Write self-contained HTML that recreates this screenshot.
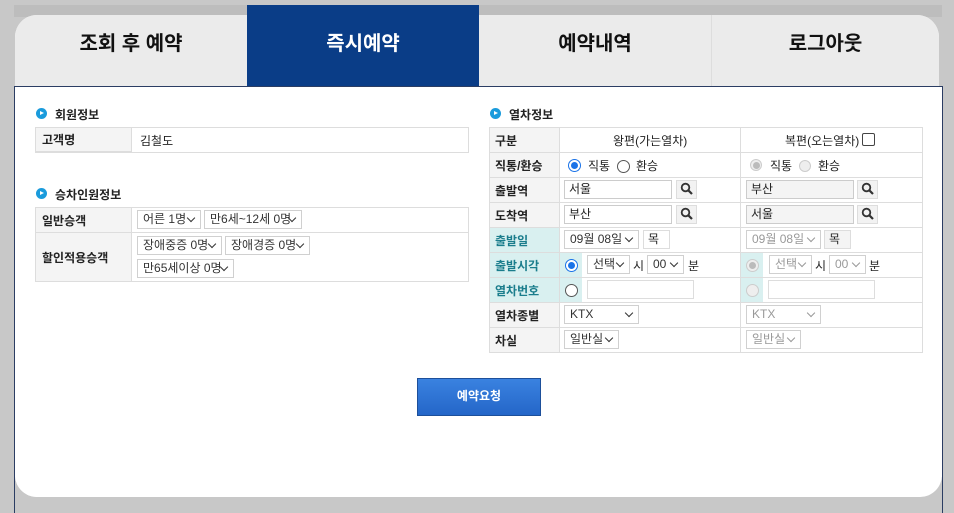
<!DOCTYPE html>
<html><head><meta charset="utf-8"><style>
*{margin:0;padding:0;box-sizing:border-box}
html,body{width:954px;height:513px;overflow:hidden}
body{background:#c8c8c8;font-family:"Liberation Sans","Noto Sans CJK KR",sans-serif;font-size:12px;color:#222;position:relative}
.a{position:absolute}
.frame{left:14px;top:5px;width:928px;height:12px;background:#bdbdbd}
.card{left:15px;top:15px;width:924px;height:482px;background:#fff;border-radius:22px}
.tab{position:absolute;top:15px;height:71px;background:#ebebeb;font-size:20px;font-weight:bold;color:#111;text-align:center;line-height:58px}
.h{font-weight:bold;font-size:12px;color:#222}
.ic{position:absolute;width:11px;height:11px;border-radius:50%;background:#1a9bdc}
.ic:after{content:"";position:absolute;left:4px;top:3px;border-left:4px solid #fff;border-top:2.5px solid transparent;border-bottom:2.5px solid transparent}
.box{position:absolute;border:1px solid #ddd;background:#fff}
.cell{position:absolute;border-right:1px solid #ddd;border-bottom:1px solid #ddd;display:flex;align-items:center}
.lb{background:#f4f4f4;font-weight:bold;padding-left:6px}
.cy{background:#d9f0f0;color:#1a7d8c}
.sel{position:absolute;height:19px;border:1px solid #d0d0d0;background:#fff;padding-left:5px;line-height:17px;font-size:12px;color:#333}
.sel:after{content:"";position:absolute;right:6px;top:4px;width:5px;height:5px;border-right:1.3px solid #333;border-bottom:1.3px solid #333;transform:rotate(45deg)}
.g{color:#999}
.g.sel:after{border-color:#999}
.inp{position:absolute;height:19px;border:1px solid #ccc;background:#fff;padding-left:4px;line-height:17px}
.sb{position:absolute;width:21px;height:19px;border:1px solid #ddd;background:#f2f2f2}
.rad{position:absolute;width:13px;height:13px;border-radius:50%;border:1px solid #555;background:#fff}
.rad.on{border-color:#1a73e8}
.rad.on:after{content:"";position:absolute;left:2px;top:2px;width:7px;height:7px;border-radius:50%;background:#1a73e8}
.rad.dis{border-color:#ccc;background:#eee}
.rad.dis.on:after{background:#bbb}
.t{position:absolute;white-space:nowrap}
</style></head><body>
<div class="a frame"></div>
<div class="a card"></div>
<div class="tab" style="left:15px;width:232px;border-top-left-radius:22px">조회 후 예약</div>
<div class="tab" style="left:247px;top:5px;height:81px;width:232px;background:#0a3d87;color:#fff;line-height:78px">즉시예약</div>
<div class="tab" style="left:479px;width:233px;border-right:1px solid #ddd">예약내역</div>
<div class="tab" style="left:712px;width:227px;border-top-right-radius:22px">로그아웃</div>
<div class="a" style="left:14px;top:86px;width:929px;height:1px;background:#2b3d63"></div>
<div class="a" style="left:15px;top:87px;width:927px;height:390px;background:#fff"></div>
<div class="a" style="left:15px;top:470px;width:927px;height:27px;background:#fff;border-radius:0 0 22px 22px"></div>
<div class="a" style="left:14px;top:86px;width:1px;height:427px;background:#2b3d63"></div>
<div class="a" style="left:942px;top:86px;width:1px;height:427px;background:#2b3d63"></div>

<!-- left -->
<div class="ic" style="left:36px;top:108px"></div><div class="t h" style="left:55px;top:106px">회원정보</div>
<div class="box" style="left:35px;top:127px;width:434px;height:26px"></div>
<div class="cell lb" style="left:36px;top:128px;width:96px;height:24px">고객명</div>
<div class="t" style="left:140px;top:132px">김철도</div>

<div class="ic" style="left:36px;top:188px"></div><div class="t h" style="left:55px;top:186px">승차인원정보</div>
<div class="box" style="left:35px;top:207px;width:434px;height:75px"></div>
<div class="cell lb" style="left:36px;top:208px;width:96px;height:25px">일반승객</div>
<div class="a" style="left:132px;top:232px;width:336px;height:1px;background:#ddd"></div>
<div class="cell lb" style="left:36px;top:233px;width:96px;height:48px;border-bottom:none">할인적용승객</div>
<div class="sel" style="left:137px;top:210px;width:64px">어른 1명</div>
<div class="sel" style="left:204px;top:210px;width:98px">만6세~12세 0명</div>
<div class="sel" style="left:137px;top:236px;width:85px">장애중증 0명</div>
<div class="sel" style="left:225px;top:236px;width:85px">장애경증 0명</div>
<div class="sel" style="left:137px;top:259px;width:97px">만65세이상 0명</div>

<!-- right -->
<div class="ic" style="left:490px;top:108px"></div><div class="t h" style="left:509px;top:106px">열차정보</div>
<div class="box" style="left:489px;top:127px;width:434px;height:226px"></div>
<div class="a" style="left:490px;top:128px;width:69px;height:224px;background:#f4f4f4"></div>
<div class="a cy" style="left:490px;top:228px;width:69px;height:75px"></div>
<div class="a cy" style="left:560px;top:253px;width:22px;height:50px"></div>
<div class="a cy" style="left:741px;top:253px;width:22px;height:50px"></div>
<div class="a" style="left:559px;top:128px;width:1px;height:224px;background:#ddd"></div>
<div class="a" style="left:740px;top:128px;width:1px;height:224px;background:#ddd"></div>
<div class="a" style="left:490px;top:152px;width:432px;height:1px;background:#ddd"></div>
<div class="a" style="left:490px;top:177px;width:432px;height:1px;background:#ddd"></div>
<div class="a" style="left:490px;top:202px;width:432px;height:1px;background:#ddd"></div>
<div class="a" style="left:490px;top:227px;width:432px;height:1px;background:#ddd"></div>
<div class="a" style="left:490px;top:252px;width:432px;height:1px;background:#ddd"></div>
<div class="a" style="left:490px;top:277px;width:432px;height:1px;background:#ddd"></div>
<div class="a" style="left:490px;top:302px;width:432px;height:1px;background:#ddd"></div>
<div class="a" style="left:490px;top:327px;width:432px;height:1px;background:#ddd"></div>
<div class="t" style="left:495px;top:132px;font-weight:bold">구분</div>
<div class="t" style="left:495px;top:157px;font-weight:bold">직통/환승</div>
<div class="t" style="left:495px;top:182px;font-weight:bold">출발역</div>
<div class="t" style="left:495px;top:207px;font-weight:bold">도착역</div>
<div class="t" style="left:495px;top:232px;font-weight:bold;color:#1a7d8c">출발일</div>
<div class="t" style="left:495px;top:257px;font-weight:bold;color:#1a7d8c">출발시각</div>
<div class="t" style="left:495px;top:282px;font-weight:bold;color:#1a7d8c">열차번호</div>
<div class="t" style="left:495px;top:307px;font-weight:bold">열차종별</div>
<div class="t" style="left:495px;top:332px;font-weight:bold">차실</div>

<div class="t" style="left:613px;top:132px">왕편(가는열차)</div>
<div class="t" style="left:785px;top:132px">복편(오는열차)</div>
<div class="a" style="left:862px;top:133px;width:13px;height:13px;border:1px solid #444;border-radius:2px"></div>

<div class="rad on" style="left:568px;top:159px"></div><div class="t" style="left:588px;top:157px">직통</div>
<div class="rad" style="left:617px;top:160px"></div><div class="t" style="left:636px;top:157px">환승</div>
<div class="rad dis on" style="left:750px;top:159px;width:12px;height:12px"></div><div class="t" style="left:770px;top:157px">직통</div>
<div class="rad dis" style="left:799px;top:160px;width:12px;height:12px"></div><div class="t" style="left:818px;top:157px">환승</div>

<div class="inp" style="left:564px;top:180px;width:108px">서울</div><div class="sb" style="left:676px;top:180px"></div>
<div class="inp" style="left:564px;top:205px;width:108px">부산</div><div class="sb" style="left:676px;top:205px"></div>
<div class="inp" style="left:746px;top:180px;width:108px;background:#f4f4f4">부산</div><div class="sb" style="left:857px;top:180px"></div>
<div class="inp" style="left:746px;top:205px;width:108px;background:#f4f4f4">서울</div><div class="sb" style="left:857px;top:205px"></div>

<div class="sel" style="left:564px;top:230px;width:75px">09월 08일</div>
<div class="inp" style="left:643px;top:230px;width:27px;border-color:#ddd">목</div>
<div class="sel g" style="left:746px;top:230px;width:75px">09월 08일</div>
<div class="inp" style="left:824px;top:230px;width:27px;border-color:#ddd;background:#f4f4f4">목</div>

<div class="rad on" style="left:565px;top:259px"></div>
<div class="sel" style="left:587px;top:255px;width:43px">선택</div><div class="t" style="left:633px;top:257px">시</div>
<div class="sel" style="left:647px;top:255px;width:37px">00</div><div class="t" style="left:688px;top:257px">분</div>
<div class="rad dis on" style="left:746px;top:259px"></div>
<div class="sel g" style="left:769px;top:255px;width:43px">선택</div><div class="t" style="left:815px;top:257px">시</div>
<div class="sel g" style="left:829px;top:255px;width:37px">00</div><div class="t" style="left:869px;top:257px">분</div>

<div class="rad" style="left:565px;top:284px"></div>
<div class="inp" style="left:587px;top:280px;width:107px;border-color:#ddd"></div>
<div class="rad dis" style="left:746px;top:284px"></div>
<div class="inp" style="left:768px;top:280px;width:107px;border-color:#ddd"></div>

<div class="sel" style="left:564px;top:305px;width:75px">KTX</div>
<div class="sel g" style="left:746px;top:305px;width:75px">KTX</div>
<div class="sel" style="left:564px;top:330px;width:55px">일반실</div>
<div class="sel g" style="left:746px;top:330px;width:55px">일반실</div>

<svg class="a" style="left:680px;top:182px" width="14" height="14"><circle cx="5.5" cy="5.5" r="3.8" fill="none" stroke="#333" stroke-width="1.8"/><path d="M8.3 8.3L12 12" stroke="#333" stroke-width="2.2"/></svg>
<svg class="a" style="left:680px;top:207px" width="14" height="14"><circle cx="5.5" cy="5.5" r="3.8" fill="none" stroke="#333" stroke-width="1.8"/><path d="M8.3 8.3L12 12" stroke="#333" stroke-width="2.2"/></svg>
<svg class="a" style="left:861px;top:182px" width="14" height="14"><circle cx="5.5" cy="5.5" r="3.8" fill="none" stroke="#333" stroke-width="1.8"/><path d="M8.3 8.3L12 12" stroke="#333" stroke-width="2.2"/></svg>
<svg class="a" style="left:861px;top:207px" width="14" height="14"><circle cx="5.5" cy="5.5" r="3.8" fill="none" stroke="#333" stroke-width="1.8"/><path d="M8.3 8.3L12 12" stroke="#333" stroke-width="2.2"/></svg>

<div class="a" style="left:417px;top:378px;width:124px;height:38px;background:linear-gradient(#3a82e0,#2466c8);border:1px solid #1d4f9a;color:#fff;font-weight:bold;font-size:12px;text-align:center;line-height:35px">예약요청</div>
</body></html>
